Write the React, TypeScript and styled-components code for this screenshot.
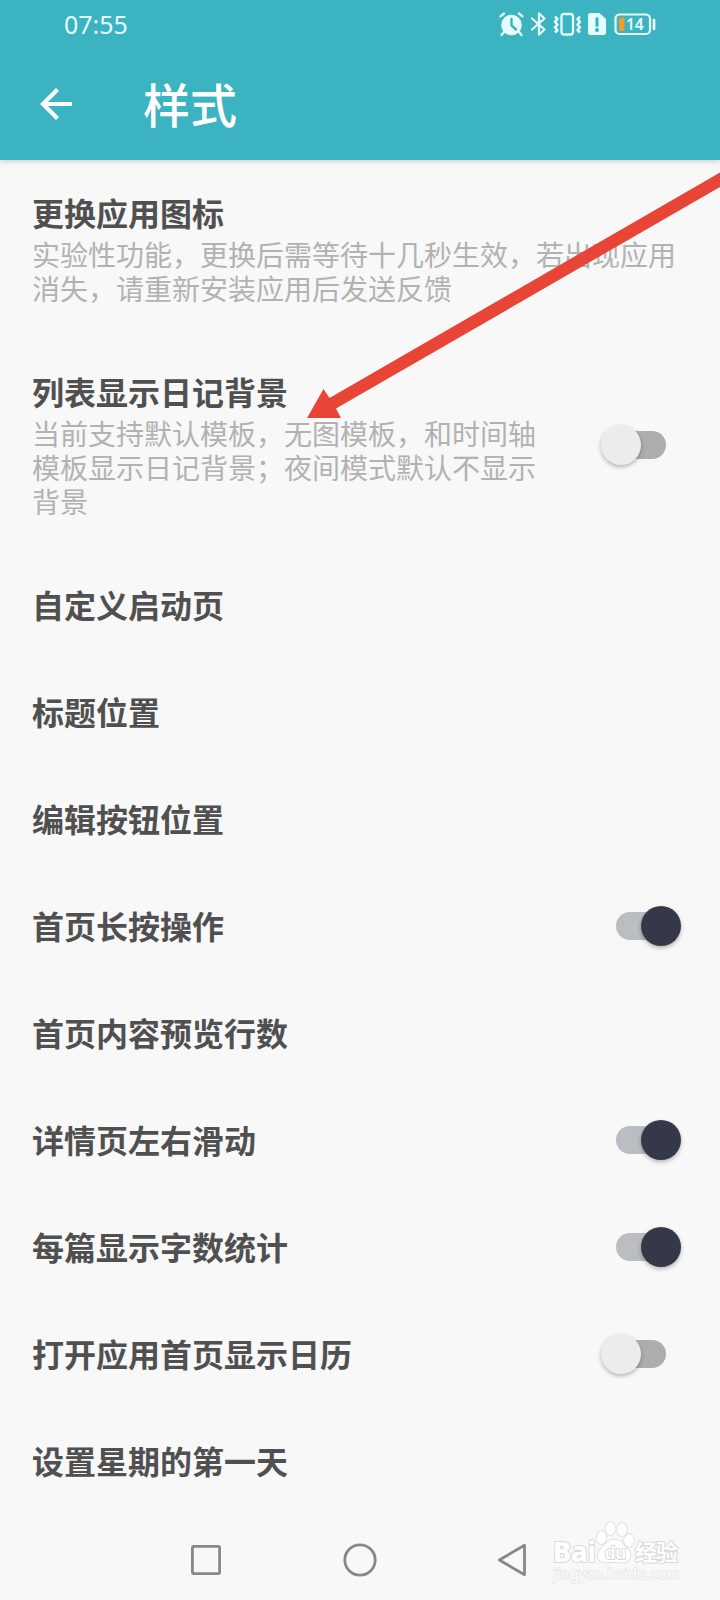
import React from 'react';
import styled, { createGlobalStyle } from 'styled-components';

const GlobalStyle = createGlobalStyle`
  * { box-sizing: border-box; }
  body {
    margin: 0;
    background: #f8f8f8;
    font-family: KaiTi, "Noto Sans CJK SC", sans-serif;
  }
  svg { display: block; flex: none; }
`;

const Screen = styled.div`
  position: relative;
  width: 720px;
  height: 1600px;
  display: flex;
  flex-direction: column;
  overflow: hidden;
  background: #f8f8f8;
`;

const Header = styled.header`
  flex: none;
  height: 160px;
  background: #3bb3c1;
  box-shadow: 0 1px 6px rgba(0, 0, 0, 0.2);
`;

const StatusBar = styled.div`
  height: 48px;
  padding: 0 64px;
  display: flex;
  align-items: center;
  justify-content: space-between;
  color: #e6fdff;
`;

const Clock = styled.span`
  font: 25px/48px "Noto Sans", sans-serif;
`;

const Toolbar = styled.div`
  height: 112px;
  padding: 0 0 0 36px;
  display: flex;
  align-items: center;
`;

const PageTitle = styled.h1`
  margin: 0 0 2px 67px;
  color: #fff;
  font-size: 47px;
  line-height: 64px;
  font-weight: 500;
`;

const List = styled.main`
  flex: none;
`;

const Row = styled.div`
  display: flex;
  align-items: center;
  gap: 48px;
  padding: 33px 39px 33px 32px;

  &:first-child {
    padding-top: 32px;
  }
`;

const RowText = styled.div`
  flex: 1;
  min-width: 0;
`;

const RowTitle = styled.div`
  color: #505050;
  font-size: 32px;
  line-height: 41px;
  font-weight: 700;
`;

const RowNote = styled.div`
  margin-top: 4px;
  color: #b2b2b2;
  font-size: 28px;
  line-height: 34px;
`;

const Switch = styled.div`
  flex: none;
  width: 80px;
  height: 28px;
  padding: 0 15px;
  display: flex;
  align-items: center;
`;

const Track = styled.div<{ $on: boolean }>`
  width: 50px;
  height: 28px;
  border-radius: 14px;
  display: flex;
  align-items: center;
  justify-content: ${(p) => (p.$on ? 'flex-end' : 'flex-start')};
  background: ${(p) => (p.$on ? '#babdc1' : '#adadad')};
`;

const Thumb = styled.div<{ $on: boolean }>`
  flex: none;
  width: 40px;
  height: 40px;
  margin: 0 -15px;
  border-radius: 50%;
  background: ${(p) => (p.$on ? '#353849' : '#ececec')};
  box-shadow: 0 2px 4px rgba(0, 0, 0, 0.28);
`;

const NavBar = styled.nav`
  flex: 1;
  display: flex;
  align-items: center;
  gap: 118px;
  padding: 6px 0 0 188px;
`;

const PointerArrow = styled.svg`
  position: absolute;
  left: 300px;
  top: 165px;
`;

const Watermark = styled.svg`
  position: absolute;
  left: 546px;
  top: 1516px;
`;

function StatusIcons() {
  return (
    <svg width="160" height="28" viewBox="0 0 160 28" fill="none" stroke="#e6fdff">
      <g transform="translate(0 2)">
        <circle cx="15.5" cy="13" r="10.3" fill="#e6fdff" stroke="none" />
        <path d="M4.500 4.300 8 1.500M23 1.500l3.500 2.800M8 20 5.500 23M23 20l2.500 3" strokeWidth="2.300" strokeLinecap="round" />
        <path d="M15.500 7v6.500l4.500 4" stroke="#3bb3c1" strokeWidth="2.400" strokeLinecap="round" />
        <path d="M36 6.500 48.500 17.500 43 22.700V1.300L48.500 6.500 36 17.500" strokeWidth="2.200" strokeLinejoin="round" strokeLinecap="round" />
        <rect x="65.500" y="2" width="11.500" height="20.500" rx="2.500" strokeWidth="2.300" />
        <path d="M59 4.500l2.500 2.700-2.500 2.700 2.500 2.700-2.500 2.700 2.500 2.700-2.500 2.500M84 4.500l-2.500 2.700 2.500 2.700-2.500 2.700 2.500 2.700-2.500 2.700 2.500 2.500" strokeWidth="2.500" strokeLinejoin="round" />
        <path d="M94.500 1h9l6.500 6v13.500a2.500 2.500 0 0 1-2.500 2.500h-13a2.500 2.500 0 0 1-2.500-2.500v-17a2.500 2.500 0 0 1 2.500-2.500z" fill="#e6fdff" stroke="none" />
        <path d="M101 6.500v7" stroke="#3bb3c1" strokeWidth="3" strokeLinecap="round" />
        <circle cx="101" cy="18" r="2" fill="#3bb3c1" stroke="none" />
        <rect x="119.500" y="2.500" width="34.500" height="19.500" rx="4" strokeWidth="2.200" />
        <rect x="123" y="5.500" width="5.500" height="13.500" rx="1.500" fill="#f49b27" stroke="none" />
        <path d="M158 8v9" strokeWidth="2.700" strokeLinecap="round" />
        <text x="130" y="18" fontFamily="Noto Sans, sans-serif" fontSize="15.500" fontWeight="600" fill="#e6fdff" stroke="none">14</text>
      </g>
    </svg>
  );
}

function BackArrow() {
  return (
    <svg width="40" height="40" viewBox="0 0 40 40" fill="none" stroke="#fff" strokeWidth="4.200">
      <path d="M36 20H7M21.500 5.500 7 20l14.500 14.500" />
    </svg>
  );
}

type Item = { title: string; note?: string; on?: boolean };

const items: Item[] = [
  { title: '更换应用图标', note: '实验性功能，更换后需等待十几秒生效，若出现应用消失，请重新安装应用后发送反馈' },
  { title: '列表显示日记背景', note: '当前支持默认模板，无图模板，和时间轴模板显示日记背景；夜间模式默认不显示背景', on: false },
  { title: '自定义启动页' },
  { title: '标题位置' },
  { title: '编辑按钮位置' },
  { title: '首页长按操作', on: true },
  { title: '首页内容预览行数' },
  { title: '详情页左右滑动', on: true },
  { title: '每篇显示字数统计', on: true },
  { title: '打开应用首页显示日历', on: false },
  { title: '设置星期的第一天' },
];

function SettingRow({ title, note, on }: Item) {
  return (
    <Row>
      <RowText>
        <RowTitle>{title}</RowTitle>
        {note && <RowNote>{note}</RowNote>}
      </RowText>
      {on !== undefined && (
        <Switch role="switch" aria-checked={on}>
          <Track $on={on}>
            <Thumb $on={on} />
          </Track>
        </Switch>
      )}
    </Row>
  );
}

export default function App() {
  return (
    <>
      <GlobalStyle />
      <Screen>
        <Header>
          <StatusBar>
            <Clock>07:55</Clock>
            <StatusIcons />
          </StatusBar>
          <Toolbar>
            <BackArrow />
            <PageTitle>样式</PageTitle>
          </Toolbar>
        </Header>
        <List>
          {items.map((item) => (
            <SettingRow key={item.title} {...item} />
          ))}
        </List>
        <NavBar>
          <svg width="36" height="36" viewBox="0 0 36 36" fill="none" stroke="#888" strokeWidth="2.800">
            <rect x="4.400" y="4.400" width="27.200" height="27.200" rx="1.500" />
          </svg>
          <svg width="36" height="36" viewBox="0 0 36 36" fill="none" stroke="#888" strokeWidth="2.800">
            <circle cx="18" cy="18" r="15.200" />
          </svg>
          <svg width="36" height="36" viewBox="0 0 36 36" fill="none" stroke="#888" strokeWidth="2.800" strokeLinejoin="round">
            <path d="M28.500 3.300v29.400L3.300 18z" />
          </svg>
        </NavBar>
        <PointerArrow width="420" height="260" viewBox="300 165 420 260">
          <path d="M307 418 323.500 389 329.500 398 720 172.500V187L336 408.500 341 418z" fill="#e94537" />
        </PointerArrow>
        <Watermark width="150" height="72" viewBox="0 0 150 72" fill="#fff" stroke="#d9d9d9" strokeWidth="2" strokeLinejoin="round" paintOrder="stroke">
          <text x="7" y="46" fontSize="29" fontFamily="Noto Sans, sans-serif" fontWeight="800" textLength="43" lengthAdjust="spacingAndGlyphs">Bai</text>
          <text x="89" y="44" fontSize="22" fontFamily="Noto Sans CJK SC, sans-serif" fontWeight="700" textLength="43">经验</text>
          <g strokeWidth="1.400">
            <ellipse cx="55.500" cy="21.500" rx="5" ry="6.500" />
            <ellipse cx="64.500" cy="12.500" rx="5" ry="6.500" />
            <ellipse cx="76" cy="13.500" rx="5" ry="6.500" />
            <ellipse cx="83" cy="24.500" rx="5" ry="6.500" />
            <path d="M69 23.500c6 0 8 5 12 9 6 5 4 14-4 14-5 0-11-1-16 0-9 1-12-8-6-14 4-4 7-9 14-9z" />
          </g>
          <text x="59" y="43" fontSize="19" fontFamily="Liberation Sans, sans-serif" fontWeight="700" textLength="21" lengthAdjust="spacingAndGlyphs">du</text>
          <text x="7" y="63" fontSize="14" fontFamily="Noto Sans, sans-serif" textLength="126" stroke="#e2e2e2" strokeWidth="1.400">jingyan.baidu.com</text>
        </Watermark>
      </Screen>
    </>
  );
}
